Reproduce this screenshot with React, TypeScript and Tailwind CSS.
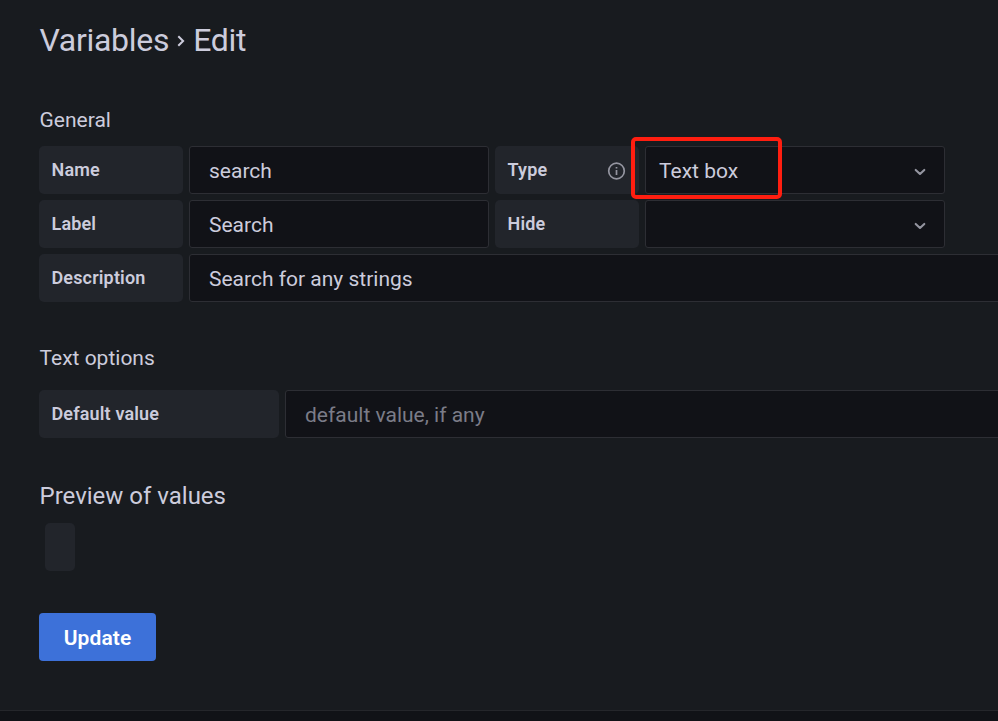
import React from "react";

function Label({ children, className = "w-36" }: { children: React.ReactNode; className?: string }) {
  return (
    <div className={`flex h-12 shrink-0 items-center justify-between rounded-[5px] bg-[#22252b] pb-px pl-[12.5px] pr-3 text-[18px] font-semibold tracking-[0.15px] text-[#ccccdc] ${className}`}>
      {children}
    </div>
  );
}

function Field({ children, className = "w-[300px]" }: { children?: React.ReactNode; className?: string }) {
  return (
    <div className={`flex h-12 shrink-0 items-center rounded-[3px] border border-[#2d2e34] bg-[#111217] pt-[3px] text-[21px] text-[#ccccdc] ${className}`}>
      {children}
    </div>
  );
}

function Chevron() {
  return (
    <svg className="ml-auto mr-[18px] h-3 w-3" viewBox="0 0 12 12" fill="none" stroke="#9495a0" strokeWidth="2.1" strokeLinecap="round" strokeLinejoin="round">
      <path d="M1.7 3.9 6 8 10.3 3.9" />
    </svg>
  );
}

export default function App() {
  return (
    <main className="flex h-[721px] w-[998px] flex-col overflow-hidden bg-[#181b1f] pl-[39px] font-['Roboto',sans-serif] text-[#ccccdc]">
      <h1 className="mt-5 flex h-10 items-center pl-[0.5px] text-[32px] tracking-[-0.3px]">
        Variables
        <svg className="ml-2 mr-2 mt-0.5 h-3 w-2" viewBox="0 0 8 12" fill="none" stroke="#ccccdc" strokeWidth="2">
          <path d="m1.3 1.2 4.8 4.8-4.8 4.8" />
        </svg>
        Edit
      </h1>
      <h2 className="mt-[45px] h-[30px] pl-[0.5px] text-[21px] leading-[30px]">General</h2>
      <div className="mt-[11px] flex flex-col gap-1.5">
        <div className="flex gap-1.5">
          <Label>Name</Label>
          <Field className="w-[300px] pl-[19px]">search</Field>
          <Label>
            Type
            <svg className="mt-0.5 h-5 w-5" viewBox="0 0 20 20" fill="none" stroke="#9495a0" strokeWidth="1.7">
              <circle cx="9.5" cy="10" r="7.8" />
              <path d="M9.5 9v5M9.5 6v1.6" />
            </svg>
          </Label>
          <div className="relative">
            <Field className="w-[300px] pl-[13px]">Text box<Chevron /></Field>
            <div className="absolute -left-[14px] -top-[9.5px] h-[62px] w-[151px] rounded-[5px] border-4 border-[#ff1e10]" />
          </div>
        </div>
        <div className="flex gap-1.5">
          <Label>Label</Label>
          <Field className="w-[300px] pl-[19px]">Search</Field>
          <Label>Hide</Label>
          <Field className="w-[300px]"><Chevron /></Field>
        </div>
        <div className="flex gap-1.5">
          <Label>Description</Label>
          <Field className="w-[820px] pl-[19px]">Search for any strings</Field>
        </div>
      </div>
      <h2 className="mt-[41px] h-[30px] pl-[0.5px] text-[21px] leading-[30px]">Text options</h2>
      <div className="mt-[17px] flex gap-1.5">
        <Label className="w-60">Default value</Label>
        <Field className="w-[724px] pl-[19px]"><span className="text-[#7b7c88]">default value, if any</span></Field>
      </div>
      <h2 className="mt-[42px] h-8 pl-[0.5px] text-[24px] leading-8">Preview of values</h2>
      <div className="ml-1.5 mt-[11px] h-12 w-[30px] rounded-[5px] bg-[#22252b]" />
      <button className="mt-[42px] h-12 w-[117px] rounded-sm bg-[#3d71d9] pt-[3px] text-[21px] font-semibold tracking-[0.1px] text-white">Update</button>
      <div className="-ml-[39px] mt-auto h-[11px] shrink-0 border-t border-[#25262b] bg-[#111217]" />
    </main>
  );
}
